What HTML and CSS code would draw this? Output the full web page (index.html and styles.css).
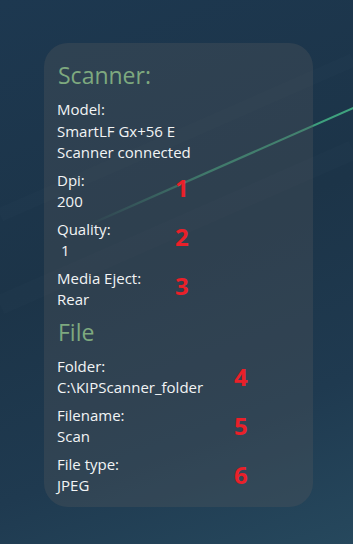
FILE: index.html
```html
<!DOCTYPE html>
<html>
<head>
<meta charset="utf-8">
<link rel="stylesheet" href="styles.css">
</head>
<body>
<div class="scene">
  <svg class="streak" width="353" height="544" viewBox="0 0 353 544">
    <defs>
      <linearGradient id="lg" x1="353" y1="108" x2="85" y2="226" gradientUnits="userSpaceOnUse">
        <stop offset="0" stop-color="#3fa47f" stop-opacity="1"/>
        <stop offset="0.55" stop-color="#3fa47f" stop-opacity="0.8"/>
        <stop offset="1" stop-color="#3fa47f" stop-opacity="0"/>
      </linearGradient>
    </defs>
    <line x1="360" y1="105" x2="75" y2="231" stroke="url(#lg)" stroke-width="2.2"/>
    <line x1="353" y1="60" x2="0" y2="215" stroke="#ffffff" stroke-opacity="0.012" stroke-width="14"/>
    <line x1="353" y1="150" x2="0" y2="305" stroke="#ffffff" stroke-opacity="0.01" stroke-width="20"/>
  </svg>
  <div class="panel">
    <h2 class="heading">Scanner:</h2>
    <div class="group">
      <div class="line">Model:</div>
      <div class="line">SmartLF Gx+56 E</div>
      <div class="line">Scanner connected</div>
    </div>
    <div class="group">
      <div class="line">Dpi:</div>
      <div class="line">200</div>
      <span class="tag tag-a">1</span>
    </div>
    <div class="group">
      <div class="line">Quality:</div>
      <div class="line">&nbsp;1</div>
      <span class="tag tag-a">2</span>
    </div>
    <div class="group">
      <div class="line">Media Eject:</div>
      <div class="line">Rear</div>
      <span class="tag tag-a">3</span>
    </div>
    <h2 class="heading heading-file">File</h2>
    <div class="group">
      <div class="line">Folder:</div>
      <div class="line">C:\KIPScanner_folder</div>
      <span class="tag tag-b">4</span>
    </div>
    <div class="group">
      <div class="line">Filename:</div>
      <div class="line">Scan</div>
      <span class="tag tag-b">5</span>
    </div>
    <div class="group">
      <div class="line">File type:</div>
      <div class="line">JPEG</div>
      <span class="tag tag-b">6</span>
    </div>
  </div>
</div>
</body>
</html>
```
FILE: styles.css
```css
html, body {
  margin: 0;
  padding: 0;
}
body {
  width: 353px;
  height: 544px;
  overflow: hidden;
  font-family: "Open Sans", "Noto Sans", sans-serif;
}
.scene {
  position: relative;
  width: 353px;
  height: 544px;
  background: linear-gradient(160deg, #1d3850 0%, #1c3448 45%, #1f3a50 75%, #26485d 100%);
  padding-top: 43px;
  box-sizing: border-box;
  overflow: hidden;
}
.streak {
  position: absolute;
  left: 0;
  top: 0;
}
.panel {
  position: relative;
  margin-left: 44px;
  width: 269px;
  height: 464px;
  box-sizing: border-box;
  border-radius: 24px;
  background: rgba(80, 86, 92, 0.36);
  padding: 17px 0 0 13px;
  color: #f2f4f5;
}
.heading {
  margin: 0 0 9px 1px;
  font-weight: 400;
  font-size: 23px;
  line-height: 30px;
  color: #7ea97f;
}
.heading-file {
  margin-top: 4px;
  margin-bottom: 9px;
}
.group {
  position: relative;
  margin-bottom: 6px;
}
.line {
  font-size: 15px;
  line-height: 21.5px;
  white-space: pre;
}
.tag {
  position: absolute;
  font-family: "Open Sans", sans-serif;
  font-weight: 700;
  font-size: 24px;
  line-height: 24px;
  color: #ea2029;
}
.tag-a {
  top: 6px;
  left: 118px;
}
.tag-b {
  top: 9px;
  left: 177px;
}
```
